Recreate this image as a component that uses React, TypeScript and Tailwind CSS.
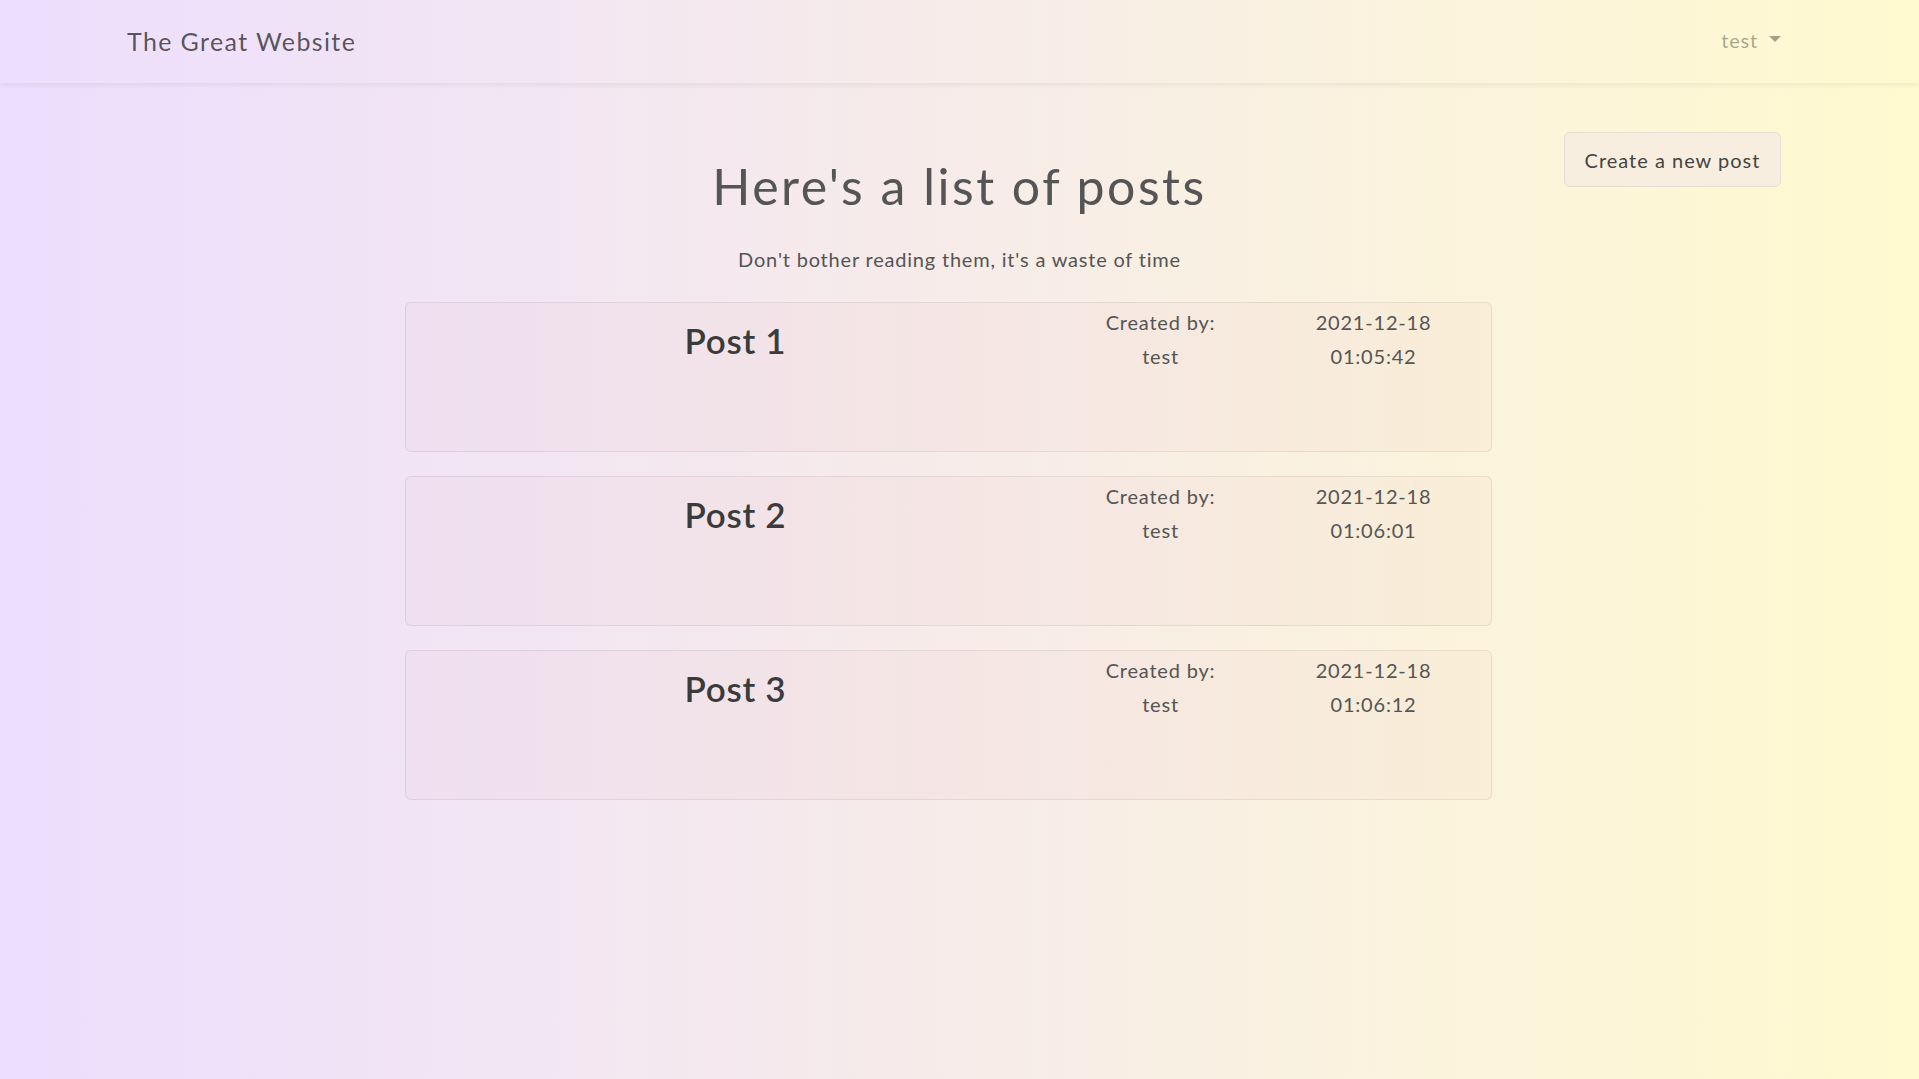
import React from "react";

const posts = [
  { title: "Post 1", author: "test", date: "2021-12-18", time: "01:05:42" },
  { title: "Post 2", author: "test", date: "2021-12-18", time: "01:06:01" },
  { title: "Post 3", author: "test", date: "2021-12-18", time: "01:06:12" },
];

export default function App() {
  return (
    <div
      className="min-h-[1079px] w-full bg-gradient-to-r from-[#eddefe] via-[#f7ece9] to-[#fffacf] text-[#555] tracking-[0.05em]"
      style={{ fontFamily: "Lato, 'Open Sans', sans-serif" }}
    >
      <nav className="h-[83px] flex items-center justify-between pl-[127px] pr-[138px] shadow-[0_2px_5px_rgba(0,0,0,0.07)]">
        <div className="text-[25px] leading-none text-black/65 tracking-[0.055em]">The Great Website</div>
        <div className="flex items-center gap-[11px] text-[20px] text-black/35 mt-[-4px]">
          <span>test</span>
          <span className="block w-0 h-0 border-l-[6px] border-r-[6px] border-t-[6px] border-l-transparent border-r-transparent border-t-black/35 mt-[-2px]" />
        </div>
      </nav>

      <main className="pt-[49px]">
        <div className="grid grid-cols-[1fr_auto_1fr] px-[138px]">
          <div />
          <h1 className="text-[50px] leading-[60px] text-[#555] font-normal mt-[24px] tracking-[0.05em]">
            Here's a list of posts
          </h1>
          <div className="flex justify-end items-start">
            <button className="h-[55px] w-[217px] rounded-[6px] border border-[#e7ddd2] bg-[#f8eee0] text-[20px] text-[#444] tracking-[0.05em]">
              Create a new post
            </button>
          </div>
        </div>
        <p className="text-center text-[20px] leading-[30px] text-[#555] mt-[28px]">
          Don't bother reading them, it's a waste of time
        </p>

        <div className="w-[1087px] ml-[405px] mt-[28px] flex flex-col gap-[24px]">
          {posts.map((p) => (
            <div
              key={p.title}
              className="h-[150px] rounded-[6px] border border-black/[0.07] bg-[rgba(210,120,150,0.045)] flex"
            >
              <div className="flex-1 text-center pt-[16px]">
                <h3 className="text-[35px] leading-[42px] font-semibold text-[#3b3b3b] tracking-[0.02em]">
                  {p.title}
                </h3>
              </div>
              <div className="w-[191px] text-center text-[20px] leading-[34px] pt-[2px]">
                <div>Created by:</div>
                <div>{p.author}</div>
              </div>
              <div className="w-[235px] text-center text-[20px] leading-[34px] pt-[2px]">
                <div>{p.date}</div>
                <div>{p.time}</div>
              </div>
            </div>
          ))}
        </div>
      </main>
    </div>
  );
}
